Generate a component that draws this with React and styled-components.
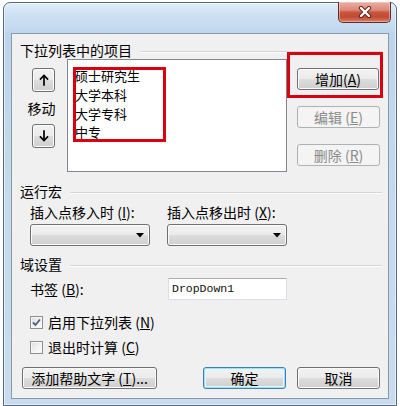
import React from 'react';
import styled, { createGlobalStyle, css } from 'styled-components';

const Global = createGlobalStyle`
  html, body { margin: 0; padding: 0; background: #fff; }
  body {
    font-family: "Noto Sans CJK SC", "Noto Sans", sans-serif;
    font-size: 14px;
    color: #000;
  }
  * { box-sizing: border-box; }
`;

const Window = styled.div`
  margin: 2px 0 0 3px;
  width: 394px;
  height: 404px;
  border: 1px solid #56687f;
  border-radius: 7px 7px 0 0;
  background: linear-gradient(to bottom, #e2eef9 0px, #cfe2f4 10px, #c3d9ef 26px, #bcd3ea 32px, #c4d8ec 120px, #c9dcef 100%);
  padding: 0 7px 6px 7px;
  display: flex;
  flex-direction: column;
  box-shadow: inset 0 0 0 1px rgba(255, 255, 255, 0.55);
`;

const TitleBar = styled.div`
  height: 30px;
  flex: none;
  display: flex;
  justify-content: flex-end;
  align-items: flex-start;
`;

const CloseButton = styled.div`
  margin-top: -1px;
  margin-right: -2px;
  width: 53px;
  height: 21px;
  border: 1px solid #5e2e27;
  border-top: none;
  border-radius: 0 0 5px 5px;
  background: linear-gradient(to bottom, #eab0a4 0%, #da8a7a 40%, #c8553f 52%, #c24a33 75%, #d9826a 100%);
  box-shadow: inset 0 0 0 1px rgba(255, 220, 210, 0.45);
  display: flex;
  align-items: center;
  justify-content: center;
`;

const Client = styled.div`
  position: relative;
  flex: 1;
  background: #f0f0f0;
  border: 1px solid #8898ad;
  padding: 7px 6px 0 8px;
  display: flex;
  flex-direction: column;
`;

const SectionHeader = styled.div`
  display: flex;
  height: 18px;
  line-height: 18px;
  gap: 8px;
  margin-top: ${(p) => p.$mt || 0}px;
  white-space: nowrap;
  &::after {
    content: '';
    flex: 1;
    align-self: flex-start;
    margin-top: 10px;
    border-top: 1px solid #d5d5d5;
    border-bottom: 1px solid #ffffff;
  }
`;

const ListSection = styled.div`
  display: flex;
  height: 113px;
  margin-left: 12px;
`;

const MoveCol = styled.div`
  width: 23px;
  padding-top: 9px;
  display: flex;
  flex-direction: column;
  align-items: center;
`;

const MoveLabel = styled.div`
  height: 32px;
  line-height: 32px;
  white-space: nowrap;
  margin-left: -4px;
`;

const buttonFace = css`
  border: 1px solid #707070;
  border-radius: 3px;
  background: linear-gradient(to bottom, #f2f2f2 0%, #ebebeb 50%, #dddddd 50%, #cfcfcf 100%);
  box-shadow: inset 0 0 0 1px #fbfbfb;
`;

const IconButton = styled.div`
  ${buttonFace};
  width: 23px;
  height: 24px;
  display: flex;
  align-items: center;
  justify-content: center;
`;

const ListBox = styled.div`
  position: relative;
  margin-left: 12px;
  width: 220px;
  height: 100%;
  background: #fff;
  border: 1px solid #828790;
  padding: 7px 0 0 7px;
`;

const ListItem = styled.div`
  height: 18.8px;
  line-height: 18.8px;
  font-size: 13px;
  white-space: nowrap;
`;

const Annotation = styled.div`
  position: absolute;
  left: ${(p) => p.$x}px;
  top: ${(p) => p.$y}px;
  width: ${(p) => p.$w}px;
  height: ${(p) => p.$h}px;
  border: 3px solid #d9000f;
  pointer-events: none;
`;

const ButtonCol = styled.div`
  margin-left: 10px;
  padding-top: 9px;
  display: flex;
  flex-direction: column;
  gap: 16px;
`;

const Button = styled.div`
  ${buttonFace};
  width: ${(p) => p.$w || 83}px;
  height: 22px;
  line-height: 20px;
  text-align: center;
  white-space: nowrap;
  margin-left: ${(p) => p.$ml || 0}px;
  ${(p) =>
    p.$disabled &&
    css`
      border-color: #adb2b5;
      background: #f4f4f4;
      box-shadow: none;
      color: #8a8a8a;
    `}
  ${(p) =>
    p.$default &&
    css`
      border-color: #3c7fb1;
      box-shadow: inset 0 0 0 1px #9fe0f7, inset 0 0 0 2px #e6f6fc;
    `}
`;

const LabelGrid = styled.div`
  display: grid;
  grid-template-columns: 120px 120px;
  column-gap: 17px;
  row-gap: 3px;
  margin: 3px 0 0 10px;
`;

const FieldLabel = styled.div`
  height: 18px;
  line-height: 18px;
  white-space: nowrap;
`;

const Combo = styled.div`
  ${buttonFace};
  height: 22px;
  display: flex;
  align-items: center;
  justify-content: flex-end;
  padding-right: 5px;
`;

const BookmarkRow = styled.div`
  display: flex;
  align-items: center;
  margin: 5px 0 0 10px;
  height: 22px;
`;

const BookmarkLabel = styled.div`
  width: 138px;
  line-height: 22px;
  white-space: nowrap;
`;

const TextBox = styled.div`
  width: 119px;
  height: 22px;
  background: #fff;
  border: 1px solid #dbdfe6;
  border-top-color: #abadb3;
  padding-left: 3px;
  font-family: "Liberation Mono", "DejaVu Sans Mono", monospace;
  font-size: 11.5px;
  line-height: 20px;
  color: #111;
`;

const CheckRow = styled.div`
  display: flex;
  align-items: center;
  height: 18px;
  margin: ${(p) => p.$mt}px 0 0 10px;
  white-space: nowrap;
`;

const CheckBox = styled.div`
  width: 13px;
  height: 13px;
  border: 1px solid #8e8f8f;
  background: linear-gradient(135deg, #dcdcdc 0%, #f4f4f4 60%, #fdfdfd 100%);
  box-shadow: inset 0 0 0 1px #f6f6f6;
  margin-right: 5px;
  display: flex;
  align-items: center;
  justify-content: center;
`;

const BottomRow = styled.div`
  display: flex;
  margin: 11px 0 0 2px;
`;

const Mn = styled.span`
  text-decoration: underline;
  text-underline-offset: 1px;
`;

const Arrow = ({ down }) => (
  <svg width="10" height="12" viewBox="0 0 10 12">
    <g transform={down ? 'rotate(180 5 6)' : undefined} fill="none" stroke="#000" strokeWidth="1.7" strokeLinecap="square">
      <path d="M5 2 V11" />
      <path d="M1.5 5 L5 1.5 L8.5 5" />
    </g>
  </svg>
);

const CloseX = () => (
  <svg width="14" height="12" viewBox="0 0 14 12">
    <path d="M3 2 L11 10 M11 2 L3 10" stroke="#5a2018" strokeWidth="4.2" strokeLinecap="round" />
    <path d="M3 2 L11 10 M11 2 L3 10" stroke="#ffffff" strokeWidth="2.4" strokeLinecap="round" />
  </svg>
);

const DropTriangle = () => (
  <svg width="8" height="5" viewBox="0 0 8 5">
    <path d="M0 0 H8 L4 4.5 Z" fill="#000" />
  </svg>
);

const Check = () => (
  <svg width="9" height="9" viewBox="0 0 9 9">
    <path d="M1 4.5 L3.5 7 L8 1.5" fill="none" stroke="#4a5d86" strokeWidth="1.8" />
  </svg>
);

export default function App() {
  return (
    <>
      <Global />
      <Window>
        <TitleBar>
          <CloseButton>
            <CloseX />
          </CloseButton>
        </TitleBar>
        <Client>
          <SectionHeader>下拉列表中的项目</SectionHeader>
          <ListSection>
            <MoveCol>
              <IconButton>
                <Arrow />
              </IconButton>
              <MoveLabel>移动</MoveLabel>
              <IconButton>
                <Arrow down />
              </IconButton>
            </MoveCol>
            <ListBox>
              {['硕士研究生', '大学本科', '大学专科', '中专'].map((t) => (
                <ListItem key={t}>{t}</ListItem>
              ))}
              <Annotation $x={5} $y={7} $w={93} $h={75} />
            </ListBox>
            <ButtonCol>
              <Button $w={82}>
                增加(<Mn>A</Mn>)
              </Button>
              <Button $disabled>
                编辑 (<Mn>E</Mn>)
              </Button>
              <Button $disabled>
                删除 (<Mn>R</Mn>)
              </Button>
            </ButtonCol>
          </ListSection>

          <SectionHeader $mt={10}>运行宏</SectionHeader>
          <LabelGrid>
            <FieldLabel>
              插入点移入时 (<Mn>I</Mn>):
            </FieldLabel>
            <FieldLabel>
              插入点移出时 (<Mn>X</Mn>):
            </FieldLabel>
            <Combo>
              <DropTriangle />
            </Combo>
            <Combo>
              <DropTriangle />
            </Combo>
          </LabelGrid>

          <SectionHeader $mt={9}>域设置</SectionHeader>
          <BookmarkRow>
            <BookmarkLabel>
              书签 (<Mn>B</Mn>):
            </BookmarkLabel>
            <TextBox>DropDown1</TextBox>
          </BookmarkRow>
          <CheckRow $mt={13}>
            <CheckBox>
              <Check />
            </CheckBox>
            启用下拉列表 (<Mn>N</Mn>)
          </CheckRow>
          <CheckRow $mt={7}>
            <CheckBox />
            退出时计算 (<Mn>C</Mn>)
          </CheckRow>
          <BottomRow>
            <Button $w={135}>
              添加帮助文字 (<Mn>T</Mn>)...
            </Button>
            <Button $default $ml={46}>
              确定
            </Button>
            <Button $ml={11}>取消</Button>
          </BottomRow>
          <Annotation $x={275} $y={18} $w={96} $h={46} />
        </Client>
      </Window>
    </>
  );
}
